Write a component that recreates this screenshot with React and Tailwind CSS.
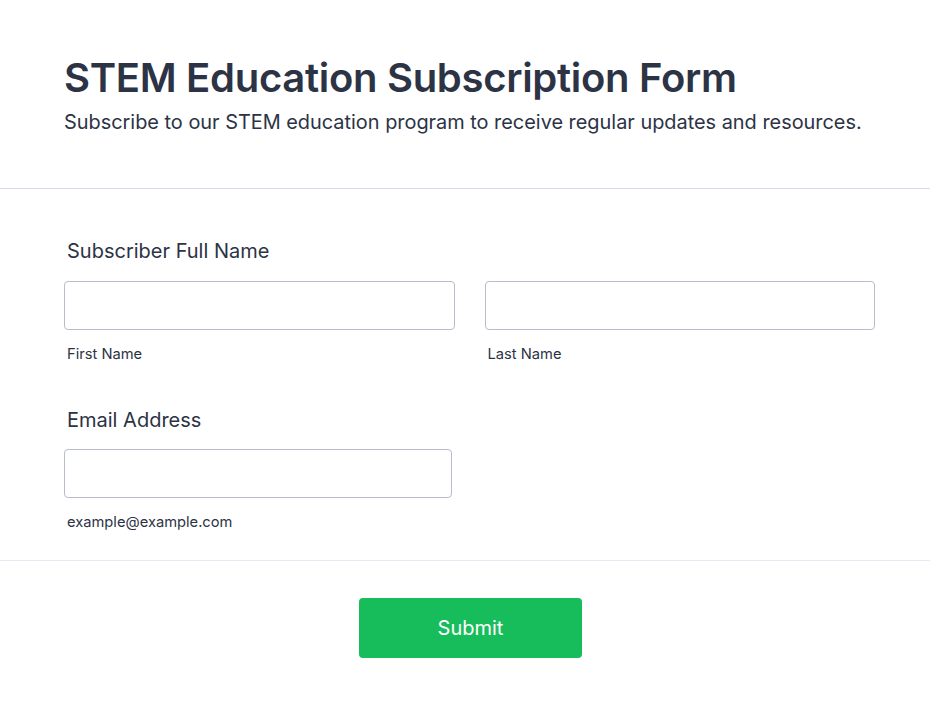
import React from "react";

const Field = ({ className = "", sub }) => (
  <div className={className}>
    <input
      type="text"
      className="block w-full h-[49px] rounded-[4px] border border-[#b8bdc9] bg-white px-3 outline-none"
    />
    <div className="mt-[15px] pl-[3px] text-[14.7px] leading-[18px] text-[#2c3345]">{sub}</div>
  </div>
);

export default function App() {
  return (
    <div
      className="min-h-[707px] w-full bg-white text-[#2c3345]"
      style={{ fontFamily: "Inter, 'Noto Sans', sans-serif" }}
    >
      {/* Header */}
      <div className="px-[64px] pt-[54px] pb-[54px] border-b border-[#d8dae9]">
        <h1 className="text-[40px] leading-[48px] font-semibold tracking-[-0.3px]">
          STEM Education Subscription Form
        </h1>
        <p className="mt-[8px] text-[19.9px] leading-[24px] whitespace-nowrap">
          Subscribe to our STEM education program to receive regular updates and resources.
        </p>
      </div>

      {/* Fields */}
      <div className="px-[64px] pt-[50px] pb-[29px] border-b border-[#e6e8f2]">
        <label className="block pl-[3px] text-[20px] leading-[24px]">
          Subscriber Full Name
        </label>
        <div className="mt-[18px] flex gap-[30px] w-[811px]">
          <Field className="flex-1" sub="First Name" />
          <Field className="flex-1" sub="Last Name" />
        </div>

        <label className="mt-[45px] block pl-[3px] text-[20px] leading-[24px]">
          Email Address
        </label>
        <Field className="mt-[17px] w-[388px]" sub="example@example.com" />
      </div>

      {/* Submit */}
      <div className="flex justify-center pt-[37px] pb-[48px]">
        <button className="ml-[11px] w-[223px] h-[60px] rounded-[4px] bg-[#18bd5b] text-white text-[20px] font-normal">
          Submit
        </button>
      </div>
    </div>
  );
}
